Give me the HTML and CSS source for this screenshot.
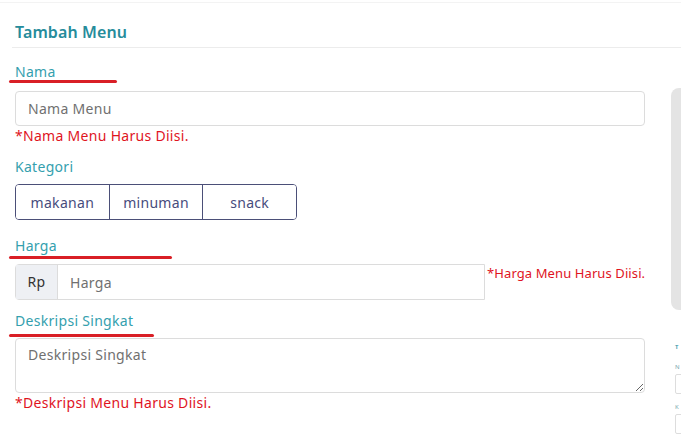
FILE: index.html
```html
<!DOCTYPE html>
<html lang="id">
<head>
<meta charset="utf-8">
<title>Tambah Menu</title>
<link rel="stylesheet" href="styles.css">
</head>
<body>
<div class="topstrip"></div>
<header class="card-head"><h1 class="title">Tambah Menu</h1></header>
<div class="page">
  <form class="form">
    <div class="field f-nama">
      <label class="label mark mark-nama">Nama</label>
      <input class="input" type="text" placeholder="Nama Menu">
      <div class="error">*Nama Menu Harus Diisi.</div>
    </div>
    <div class="field f-kat">
      <label class="label">Kategori</label>
      <div class="btn-group">
        <button type="button" class="btn">makanan</button>
        <button type="button" class="btn">minuman</button>
        <button type="button" class="btn">snack</button>
      </div>
    </div>
    <div class="field f-harga">
      <label class="label mark mark-harga">Harga</label>
      <div class="row">
        <div class="input-group">
          <span class="addon">Rp</span>
          <input class="input-in" type="text" placeholder="Harga">
        </div>
        <div class="error error-inline">*Harga Menu Harus Diisi.</div>
      </div>
    </div>
    <div class="field f-desk">
      <label class="label mark mark-desk">Deskripsi Singkat</label>
      <textarea class="textarea" placeholder="Deskripsi Singkat"></textarea>
      <div class="error">*Deskripsi Menu Harus Diisi.</div>
    </div>
  </form>
  <aside class="side">
    <div class="panel"></div>
    <div class="mini">
      <div class="mini-title">T</div>
      <div class="mini-label">N</div>
      <div class="mini-input"></div>
      <div class="mini-label">K</div>
      <div class="mini-input"></div>
    </div>
  </aside>
</div>
</body>
</html>
```

FILE: styles.css
```css
* { box-sizing: border-box; }
html, body { margin: 0; padding: 0; }
body {
  width: 681px;
  height: 437px;
  overflow: hidden;
  background: #fff;
  font-family: "Noto Sans", "Open Sans", sans-serif;
  font-size: 14px;
  letter-spacing: 0.3px;
  line-height: 20px;
  color: #333;
}
.topstrip {
  height: 3px;
  border-bottom: 1px solid #f3f3f3;
}
.card-head {
  margin-left: 12px;
  height: 45px;
  border-bottom: 1px solid #ececec;
  padding: 0 0 5px 3px;
  display: flex;
  align-items: flex-end;
}
.title {
  margin: 0;
  font-size: 16px;
  font-weight: 600;
  letter-spacing: 0.1px;
  color: #268c9b;
  line-height: 20px;
}
.page {
  display: flex;
  padding-left: 15px;
}
.form {
  width: 630px;
  flex: none;
  display: flex;
  flex-direction: column;
}
.field { display: flex; flex-direction: column; }
.f-nama { margin-top: 14px; }
.f-kat { margin-top: 11px; }
.f-harga { margin-top: 16px; }
.f-desk { margin-top: 11px; }
.label {
  color: #34a0ae;
  line-height: 20px;
}
.mark { position: relative; align-self: flex-start; }
.mark::after {
  content: "";
  position: absolute;
  left: -6px;
  height: 3px;
  border-radius: 2px;
  background: #d91f26;
}
.mark-nama::after { top: 18px; width: 108px; }
.mark-harga::after { top: 20px; width: 163px; }
.mark-desk::after { top: 23px; width: 145px; }
.f-nama .input { margin-top: 9px; }
.input, .textarea, .input-in {
  font-family: inherit;
  font-size: 14px;
  letter-spacing: 0.3px;
  color: #333;
}
.input {
  height: 35px;
  width: 630px;
  border: 1px solid #dcdcdc;
  border-radius: 4px;
  padding: 0 12px;
  outline: none;
}
::placeholder { color: #707070; opacity: 1; }
.error {
  color: #e0141e;
  line-height: 20px;
}
.btn-group {
  margin-top: 7px;
  display: flex;
  width: 282px;
  height: 36px;
  border: 1px solid #4b4f78;
  border-radius: 4px;
  overflow: hidden;
}
.btn {
  flex: 1;
  background: #fff;
  border: 0;
  border-left: 1px solid #4b4f78;
  font-family: inherit;
  font-size: 14px;
  letter-spacing: 0.3px;
  color: #474c7c;
  padding: 0;
}
.btn:first-child { border-left: 0; }
.row {
  margin-top: 8px;
  display: flex;
  align-items: flex-start;
}
.input-group {
  width: 470px;
  height: 36px;
  display: flex;
  border: 1px solid #dcdcdc;
  border-radius: 4px 0 0 4px;
  flex: none;
}
.addon {
  width: 42px;
  background: #eef0f4;
  border-right: 1px solid #dcdcdc;
  display: flex;
  align-items: center;
  justify-content: center;
  color: #333;
}
.input-in {
  flex: 1;
  border: 0;
  outline: none;
  padding: 0 12px;
  background: transparent;
}
.error-inline {
  margin-left: 2px;
  margin-top: -1px;
  white-space: nowrap;
  font-size: 13px;
  letter-spacing: 0.1px;
}
.textarea {
  margin-top: 7px;
  width: 630px;
  height: 55px;
  border: 1px solid #dcdcdc;
  border-radius: 4px;
  padding: 6px 12px;
  resize: vertical;
  outline: none;
  line-height: 20px;
}
.side {
  margin-left: 26px;
  flex: none;
  width: 200px;
  display: flex;
  flex-direction: column;
}
.panel {
  margin-top: 40px;
  height: 222px;
  background: #e4e4e4;
  border-radius: 8px;
}
.mini {
  margin-left: 4px;
  margin-top: 33px;
  display: flex;
  flex-direction: column;
  font-size: 6px;
  letter-spacing: 0;
  line-height: 8px;
}
.mini-title { color: #2a95a5; font-weight: 600; margin-bottom: 12px; }
.mini-label { color: #7aa8b0; }
.mini-input {
  margin-top: 3px;
  margin-bottom: 9px;
  height: 20px;
  border: 1px solid #ddd;
  border-radius: 2px;
}
```
